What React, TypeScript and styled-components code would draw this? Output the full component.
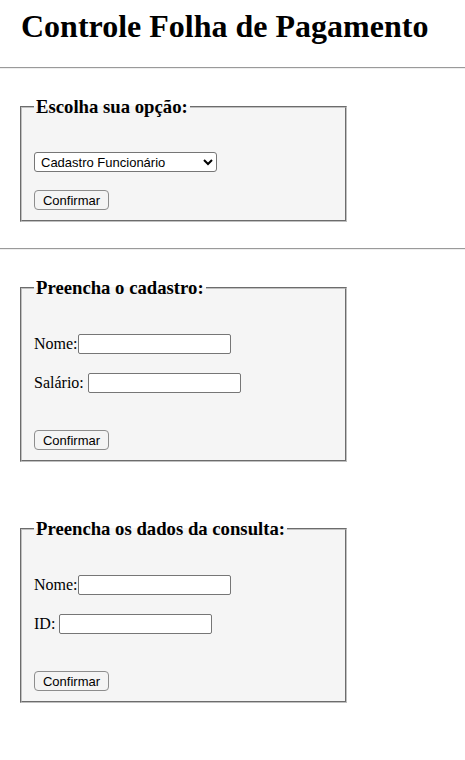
import styled, { createGlobalStyle } from 'styled-components';

const GlobalStyle = createGlobalStyle`
  body {
    margin: 0;
    background: #ffffff;
    color: #000000;
    font-family: 'Liberation Serif', 'Times New Roman', serif;
    font-size: 16px;
  }
`;

const Title = styled.h1`
  margin: 8px 0 0 21px;
  font-size: 32px;
  line-height: 36px;
  font-weight: 700;
`;

const Divider = styled.hr<{ $top: number }>`
  margin: ${(p) => p.$top}px 0 0;
  height: 0;
  border: none;
  border-top: 1px solid #9a9a9a;
  border-bottom: 1px solid #eeeeee;
`;

const Section = styled.section<{ $gap?: number; $bottom?: number }>`
  display: flex;
  flex-direction: column;
  gap: ${(p) => p.$gap ?? 0}px;
  padding: 28px 20px ${(p) => p.$bottom ?? 27}px;
`;

const Box = styled.fieldset`
  box-sizing: border-box;
  width: 327px;
  margin: 0;
  padding: 0 12px 10px;
  border: 2px groove rgb(192, 192, 192);
  background: #f5f5f5;
`;

const Legend = styled.legend`
  padding: 0 2px;
  font-size: 18.72px;
  line-height: 20px;
  font-weight: 700;
`;

const Content = styled.div<{ $top: number }>`
  display: flex;
  flex-direction: column;
  align-items: flex-start;
  padding-top: ${(p) => p.$top}px;
`;

const Row = styled.div<{ $after: number }>`
  display: flex;
  align-items: baseline;
  margin-bottom: ${(p) => p.$after}px;
`;

const Label = styled.label`
  font-size: 16px;
  white-space: pre;
`;

const Input = styled.input`
  box-sizing: border-box;
  width: 153px;
  height: 20px;
  margin: 0;
  padding: 1px 2px;
  border: 1px solid #767676;
  border-radius: 2px;
  background: #ffffff;
  font-family: 'Liberation Sans', Arial, sans-serif;
  font-size: 13px;
`;

const Select = styled.select`
  box-sizing: border-box;
  width: 183px;
  height: 20px;
  margin: 0 0 18px;
  padding: 0 2px;
  border: 1px solid #767676;
  border-radius: 3px;
  background: #ffffff;
  color: #000000;
  font-family: 'Liberation Sans', Arial, sans-serif;
  font-size: 13px;
`;

const Button = styled.button`
  box-sizing: border-box;
  width: 75px;
  height: 20px;
  margin: 0;
  padding: 0 6px;
  border: 1px solid #8d8d8d;
  border-radius: 4px;
  background: #f4f4f4;
  color: #000000;
  font-family: 'Liberation Sans', Arial, sans-serif;
  font-size: 13px;
`;

type Field = { label: string; name: string };

const FormBox = ({ legend, fields }: { legend: string; fields: Field[] }) => (
  <Box>
    <Legend>{legend}</Legend>
    <Content $top={36}>
      {fields.map((field, index) => (
        <Row key={field.name} $after={index === fields.length - 1 ? 37 : 19}>
          <Label htmlFor={field.name}>{field.label}</Label>
          <Input id={field.name} type="text" />
        </Row>
      ))}
      <Button type="button">Confirmar</Button>
    </Content>
  </Box>
);

const App = () => {
  return (
    <>
      <GlobalStyle />
      <Title>Controle Folha de Pagamento</Title>
      <Divider $top={23} />
      <Section $bottom={26}>
        <Box>
          <Legend>Escolha sua opção:</Legend>
          <Content $top={35}>
            <Select defaultValue="cadastro">
              <option value="cadastro">Cadastro Funcionário</option>
              <option value="consulta">Consulta Funcionário</option>
            </Select>
            <Button type="button">Confirmar</Button>
          </Content>
        </Box>
      </Section>
      <Divider $top={0} />
      <Section $gap={57}>
        <FormBox
          legend="Preencha o cadastro:"
          fields={[
            { label: 'Nome:', name: 'cadastro-nome' },
            { label: 'Salário: ', name: 'cadastro-salario' },
          ]}
        />
        <FormBox
          legend="Preencha os dados da consulta:"
          fields={[
            { label: 'Nome:', name: 'consulta-nome' },
            { label: 'ID: ', name: 'consulta-id' },
          ]}
        />
      </Section>
    </>
  );
};

export default App;
